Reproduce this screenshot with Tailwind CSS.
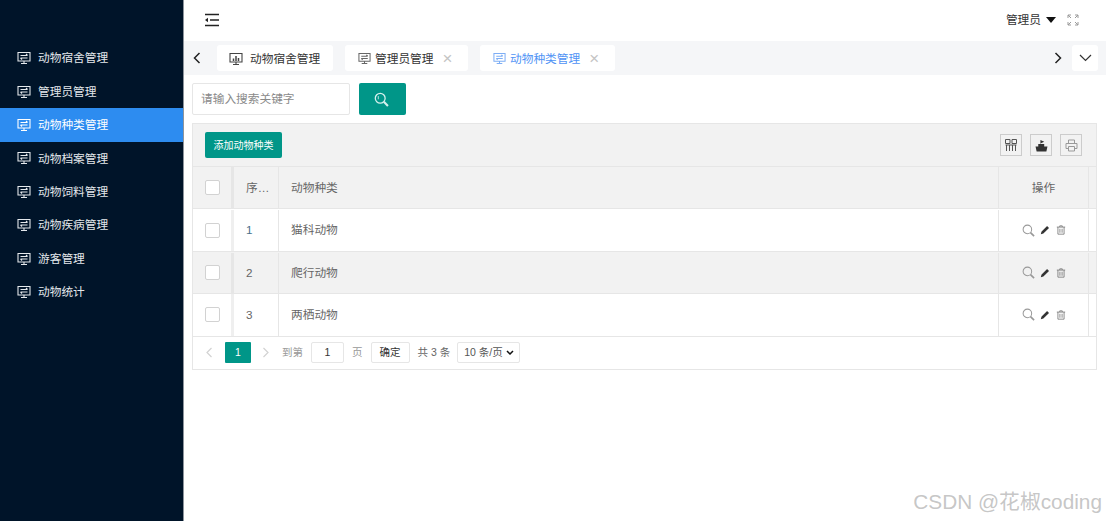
<!DOCTYPE html>
<html lang="zh-CN">
<head>
  <meta charset="UTF-8" />
  <title>动物种类管理</title>
  <script src="https://cdn.jsdelivr.net/npm/@tailwindcss/browser@4"></script>
</head>
<body class="relative h-[521px] w-[1106px] overflow-hidden bg-white font-['Liberation_Sans','Noto_Sans_CJK_SC',sans-serif] text-[11.7px] text-[#666]">

  <svg class="hidden">
    <symbol id="screen" viewBox="0 0 14 14">
      <path d="M1 1.500h12v8.500H1zM7 10v2.500M4 12.500h6M3.500 4.500h7M9 3l1.500 1.500M10.500 7h-7M5 8.500L3.500 7" fill="none" stroke="currentColor" stroke-width="1.100"/>
    </symbol>
    <symbol id="search" viewBox="0 0 14 14">
      <circle cx="5.800" cy="5.800" r="4.600" fill="none" stroke="currentColor" stroke-width="1.100"/>
      <path d="M9.200 9.200l3.800 3.800" stroke="currentColor" stroke-width="1.800"/>
    </symbol>
    <symbol id="pen" viewBox="0 0 12 12">
      <path d="M1 11l.7-3L8.500 1.200l2.300 2.300L4 10.300z" fill="currentColor"/>
    </symbol>
    <symbol id="trash" viewBox="0 0 12 12">
      <path d="M1 2.500h10M4.500 2.500V1h3v1.500M2.300 2.500v8.500h7.400V2.500M4.700 4.500v4.800M7.300 4.500v4.800" fill="none" stroke="currentColor" stroke-width="1"/>
    </symbol>
  </svg>

  <div class="flex h-full">
    <!-- Sidebar -->
    <aside class="h-full w-[184px] shrink-0 border-r border-[#8d949c] bg-[#001429] pt-[41.500px] text-[#e4e8ec]">
      <a class="flex h-[33.400px] items-center gap-[7px] pl-[17px]"><svg class="h-[14px] w-[14px]"><use href="#screen"/></svg>动物宿舍管理</a>
      <a class="flex h-[33.400px] items-center gap-[7px] pl-[17px]"><svg class="h-[14px] w-[14px]"><use href="#screen"/></svg>管理员管理</a>
      <a class="flex h-[33.400px] items-center gap-[7px] bg-[#2d8cf0] pl-[17px] text-white"><svg class="h-[14px] w-[14px]"><use href="#screen"/></svg>动物种类管理</a>
      <a class="flex h-[33.400px] items-center gap-[7px] pl-[17px]"><svg class="h-[14px] w-[14px]"><use href="#screen"/></svg>动物档案管理</a>
      <a class="flex h-[33.400px] items-center gap-[7px] pl-[17px]"><svg class="h-[14px] w-[14px]"><use href="#screen"/></svg>动物饲料管理</a>
      <a class="flex h-[33.400px] items-center gap-[7px] pl-[17px]"><svg class="h-[14px] w-[14px]"><use href="#screen"/></svg>动物疾病管理</a>
      <a class="flex h-[33.400px] items-center gap-[7px] pl-[17px]"><svg class="h-[14px] w-[14px]"><use href="#screen"/></svg>游客管理</a>
      <a class="flex h-[33.400px] items-center gap-[7px] pl-[17px]"><svg class="h-[14px] w-[14px]"><use href="#screen"/></svg>动物统计</a>
    </aside>

    <main class="min-w-0 flex-1">
      <!-- Top bar -->
      <header class="flex h-[41px] items-center pb-[2px] pl-[20px] pr-[27px]">
        <svg class="h-[14px] w-[15px] text-[#222]" viewBox="0 0 15 14"><path d="M1 1.500h14M6 7h9M1 12.500h14" stroke="currentColor" stroke-width="1.400"/><path d="M1 7l3-2.200v4.400z" fill="currentColor"/></svg>
        <span class="ml-auto text-[#333]">管理员</span>
        <span class="ml-[5px] h-0 w-0 border-x-[5px] border-t-[6px] border-x-transparent border-t-[#111]"></span>
        <svg class="ml-[11px] h-[12px] w-[12px] text-[#999]" viewBox="0 0 12 12"><path d="M1 4V1h3M8 1h3v3M11 8v3H8M4 11H1V8M1 1l3 3M11 1L8 4M11 11L8 8M1 11l3-3" fill="none" stroke="currentColor"/></svg>
      </header>

      <!-- Tabs -->
      <nav class="flex h-[34px] items-center bg-[#f5f6f8] text-[#333]">
        <svg class="ml-[9px] h-[12px] w-[8px]" viewBox="0 0 8 12"><path d="M6.500 1L1.500 6l5 5" fill="none" stroke="#222" stroke-width="1.500"/></svg>
        <div class="ml-[16px] flex h-[26px] w-[116px] items-center gap-[7px] rounded-[3px] bg-white pl-[12px] pt-[1px]">
          <svg class="h-[14px] w-[14px] text-[#444]" viewBox="0 0 14 14"><path d="M1 1.500h12v8.500H1zM7 10v2.500M4 12.500h6" fill="none" stroke="currentColor" stroke-width="1.100"/><path d="M4.500 9V6.500M7 9V4M9.500 9V6" stroke="currentColor" stroke-width="1.500"/></svg>动物宿舍管理
        </div>
        <div class="ml-[12px] flex h-[26px] w-[123px] items-center rounded-[3px] bg-white pl-[13px] pt-[1px]">
          <svg class="mr-[4px] h-[13px] w-[13px] text-[#666]"><use href="#screen"/></svg>管理员管理
          <span class="ml-[9px] text-[17px] leading-none font-light text-[#c4c4c4]">×</span>
        </div>
        <div class="ml-[12px] flex h-[26px] w-[135px] items-center rounded-[3px] bg-white pl-[13px] pt-[1px] text-[#4f93f5]">
          <svg class="mr-[4px] h-[13px] w-[13px] text-[#7eaef5]"><use href="#screen"/></svg>动物种类管理
          <span class="ml-[9px] text-[17px] leading-none font-light text-[#c4c4c4]">×</span>
        </div>
        <svg class="ml-auto h-[12px] w-[8px]" viewBox="0 0 8 12"><path d="M1.500 1l5 5-5 5" fill="none" stroke="#222" stroke-width="1.500"/></svg>
        <div class="mr-[8px] ml-[10px] flex h-[26px] w-[26px] items-center justify-center rounded-[3px] bg-white">
          <svg class="h-[8px] w-[13px]" viewBox="0 0 13 8"><path d="M1 1l5.500 5.500L12 1" fill="none" stroke="#333" stroke-width="1.200"/></svg>
        </div>
      </nav>

      <!-- Search -->
      <div class="ml-[8px] mt-[8px] flex gap-[9px]">
        <div class="flex h-[32px] w-[158px] items-center rounded-[2px] border border-[#e6e6e6] pl-[8px] text-[#8a8a8a]">请输入搜索关键字</div>
        <button class="flex h-[32px] w-[47px] items-center justify-center rounded-[2px] bg-[#009688] pr-[3px] text-[#d5f0ed]">
          <svg class="h-[15px] w-[15px]" viewBox="0 0 14 14"><circle cx="5.800" cy="5.800" r="4.600" fill="none" stroke="currentColor" stroke-width="1.200"/><path d="M9.200 9.200l3.800 3.800" stroke="currentColor" stroke-width="2"/><path d="M4 3.800v3" stroke="currentColor" stroke-width="0.800"/></svg>
        </button>
      </div>

      <!-- Table -->
      <section class="ml-[8px] mt-[8px] w-[905px] border border-[#e6e6e6]">
        <div class="flex h-[42px] items-center bg-[#f2f2f2] pl-[12px] pr-[14px]">
          <button class="h-[26px] w-[77px] rounded-[2px] bg-[#009688] text-[10px] text-white">添加动物种类</button>
          <div class="ml-auto flex gap-[8px]">
            <span class="flex h-[22px] w-[22px] items-center justify-center border border-[#ccc]">
              <svg class="h-[12px] w-[12px] text-[#555]" viewBox="0 0 12 12"><path d="M.5.500h4.500v4H.5zM7 .500h4.500v4H7zM1.500 6v6M4.500 6v6M7.500 6v6M10.500 6v6M.5 6h11" fill="none" stroke="currentColor"/></svg>
            </span>
            <span class="flex h-[22px] w-[22px] items-center justify-center border border-[#ccc]">
              <svg class="h-[13px] w-[13px] text-[#333]" viewBox="0 0 12 12"><path d="M.5 7h11l-1 4.500h-9zM3 7V4.500h5.500V7zM5 4.500V1l3.500 1.500L5.500 4" fill="currentColor"/></svg>
            </span>
            <span class="flex h-[22px] w-[22px] items-center justify-center border border-[#ccc]">
              <svg class="h-[13px] w-[13px] text-[#999]" viewBox="0 0 13 13"><path d="M3.500 4V1h6v3M3.500 9.500H1V4.500h11v5H9.500M3.500 7.500h6V12h-6z" fill="none" stroke="currentColor"/></svg>
            </span>
          </div>
        </div>

        <!-- Header row -->
        <div class="flex h-[43px] border-y border-[#e6e6e6] bg-[#f2f2f2]">
          <div class="flex w-[41px] shrink-0 items-center justify-center border-r-[3px] border-[#e6e6e6]"><span class="h-[15px] w-[15px] rounded-[2px] border border-[#d2d2d2] bg-white"></span></div>
          <div class="flex w-[45px] shrink-0 items-center border-r border-[#e6e6e6] pl-[12px]">序…</div>
          <div class="flex w-[720px] shrink-0 items-center border-r border-[#e6e6e6] pl-[12px]">动物种类</div>
          <div class="flex w-[90px] shrink-0 items-center justify-center border-r border-[#e6e6e6]">操作</div>
        </div>

        <!-- Rows -->
        <div class="flex h-[42.500px] border-b border-[#e6e6e6] pt-[1px]">
          <div class="flex w-[41px] shrink-0 items-center justify-center border-r-[3px] border-[#efefef]"><span class="h-[15px] w-[15px] rounded-[2px] border border-[#d2d2d2] bg-white"></span></div>
          <div class="flex w-[45px] shrink-0 items-center border-r border-[#e6e6e6] pl-[12px] text-[#4a6f8a]">1</div>
          <div class="flex w-[720px] shrink-0 items-center border-r border-[#e6e6e6] pl-[12px]">猫科动物</div>
          <div class="flex w-[90px] shrink-0 items-center justify-center gap-[5px] border-r border-[#e6e6e6]">
            <svg class="h-[13px] w-[13px] text-[#999]"><use href="#search"/></svg>
            <svg class="h-[10px] w-[10px] text-[#333]"><use href="#pen"/></svg>
            <svg class="ml-[1px] h-[10px] w-[10px] text-[#777]"><use href="#trash"/></svg>
          </div>
        </div>
        <div class="flex h-[42.500px] border-b border-[#e6e6e6] bg-[#f2f2f2] pt-[1px]">
          <div class="flex w-[41px] shrink-0 items-center justify-center border-r-[3px] border-[#e6e6e6]"><span class="h-[15px] w-[15px] rounded-[2px] border border-[#d2d2d2] bg-white"></span></div>
          <div class="flex w-[45px] shrink-0 items-center border-r border-[#e6e6e6] pl-[12px]">2</div>
          <div class="flex w-[720px] shrink-0 items-center border-r border-[#e6e6e6] pl-[12px]">爬行动物</div>
          <div class="flex w-[90px] shrink-0 items-center justify-center gap-[5px] border-r border-[#e6e6e6]">
            <svg class="h-[13px] w-[13px] text-[#999]"><use href="#search"/></svg>
            <svg class="h-[10px] w-[10px] text-[#333]"><use href="#pen"/></svg>
            <svg class="ml-[1px] h-[10px] w-[10px] text-[#777]"><use href="#trash"/></svg>
          </div>
        </div>
        <div class="flex h-[42.500px] border-b border-[#e6e6e6]">
          <div class="flex w-[41px] shrink-0 items-center justify-center border-r-[3px] border-[#efefef]"><span class="h-[15px] w-[15px] rounded-[2px] border border-[#d2d2d2] bg-white"></span></div>
          <div class="flex w-[45px] shrink-0 items-center border-r border-[#e6e6e6] pl-[12px]">3</div>
          <div class="flex w-[720px] shrink-0 items-center border-r border-[#e6e6e6] pl-[12px]">两栖动物</div>
          <div class="flex w-[90px] shrink-0 items-center justify-center gap-[5px] border-r border-[#e6e6e6]">
            <svg class="h-[13px] w-[13px] text-[#999]"><use href="#search"/></svg>
            <svg class="h-[10px] w-[10px] text-[#333]"><use href="#pen"/></svg>
            <svg class="ml-[1px] h-[10px] w-[10px] text-[#777]"><use href="#trash"/></svg>
          </div>
        </div>

        <!-- Pagination -->
        <div class="flex h-[32px] items-center text-[10.500px]">
          <svg class="ml-[12px] h-[11px] w-[8px]" viewBox="0 0 8 11"><path d="M6.500 1L2 5.500 6.500 10" fill="none" stroke="#d2d2d2" stroke-width="1.200"/></svg>
          <span class="ml-[12px] flex h-[21px] w-[26px] items-center justify-center rounded-[1px] bg-[#009688] text-white">1</span>
          <svg class="ml-[11px] h-[11px] w-[8px]" viewBox="0 0 8 11"><path d="M1.500 1L6 5.500 1.500 10" fill="none" stroke="#d2d2d2" stroke-width="1.200"/></svg>
          <span class="ml-[12px] text-[#999]">到第</span>
          <span class="ml-[8px] flex h-[21px] w-[33px] items-center justify-center rounded-[2px] border border-[#e6e6e6] text-[#333]">1</span>
          <span class="ml-[8px] text-[#999]">页</span>
          <span class="ml-[8px] flex h-[21px] w-[39px] items-center justify-center rounded-[2px] border border-[#e6e6e6] text-[#333]">确定</span>
          <span class="ml-[8px] text-[#666]">共 3 条</span>
          <span class="ml-[7px] flex h-[21px] w-[63px] items-center justify-between rounded-[2px] border border-[#e6e6e6] pl-[6px] pr-[5px] text-[#555]">10 条/页
            <svg class="h-[5px] w-[8px]" viewBox="0 0 8 5"><path d="M1 1l3 3 3-3" fill="none" stroke="#111" stroke-width="1.500"/></svg>
          </span>
        </div>
      </section>
    </main>
  </div>

  <!-- Watermark -->
  <div class="absolute bottom-[7px] right-[4px] text-[20.800px] leading-[24px] text-[#c0c0c0]/90">CSDN @花椒coding</div>
</body>
</html>
